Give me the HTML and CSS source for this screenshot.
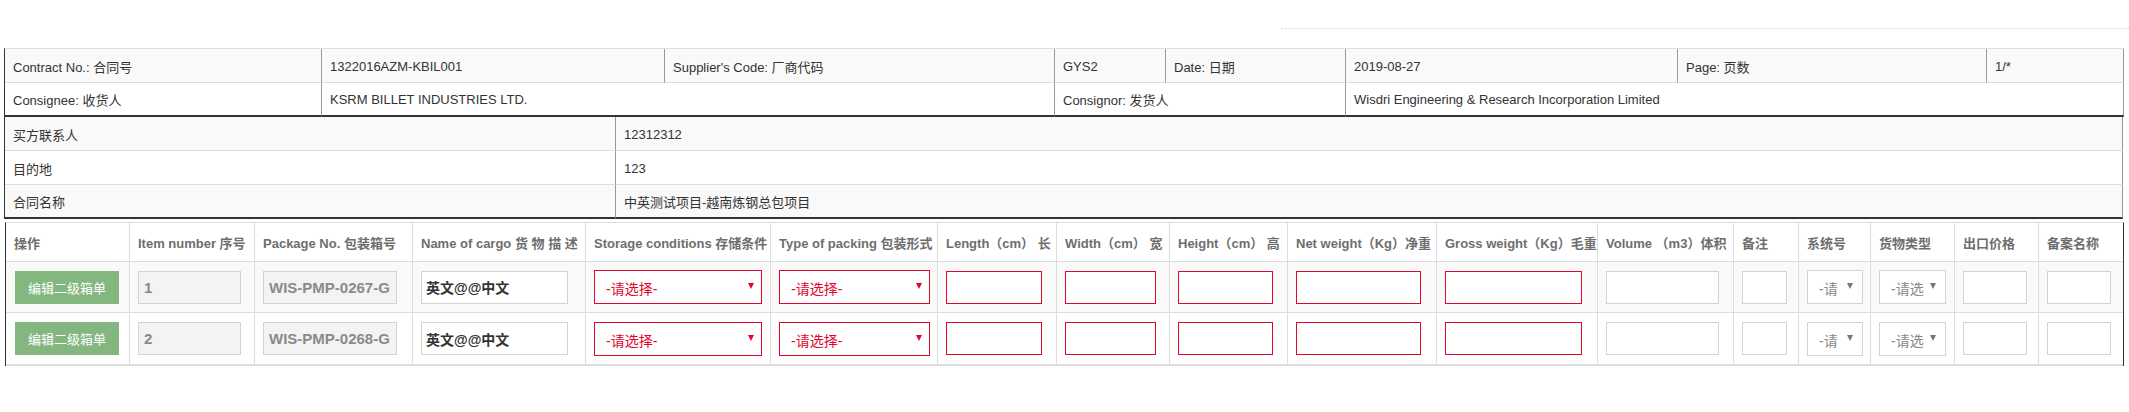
FILE: index.html
```html
<!DOCTYPE html>
<html lang="zh-CN">
<head>
<meta charset="utf-8">
<title>装箱单</title>
<link rel="stylesheet" href="styles.css">
</head>
<body>
<div class="page">
  <div class="float-panel"></div>

  <table class="info info-head">
    <colgroup>
      <col class="c317"><col class="c343"><col class="c390"><col class="c111">
      <col class="c180"><col class="c332"><col class="c309"><col class="c137">
    </colgroup>
    <tbody>
      <tr class="odd">
        <td>Contract No.: 合同号</td>
        <td>1322016AZM-KBIL001</td>
        <td>Supplier's Code: 厂商代码</td>
        <td>GYS2</td>
        <td>Date: 日期</td>
        <td>2019-08-27</td>
        <td>Page: 页数</td>
        <td>1/*</td>
      </tr>
      <tr class="last">
        <td>Consignee: 收货人</td>
        <td colspan="2">KSRM BILLET INDUSTRIES LTD.</td>
        <td colspan="2">Consignor: 发货人</td>
        <td colspan="3">Wisdri Engineering &amp; Research Incorporation Limited</td>
      </tr>
    </tbody>
  </table>

  <table class="info info-buyer">
    <colgroup><col class="c611"><col class="c1507"></colgroup>
    <tbody>
      <tr class="odd"><td>买方联系人</td><td>12312312</td></tr>
      <tr><td>目的地</td><td>123</td></tr>
      <tr class="odd last"><td>合同名称</td><td>中英测试项目-越南炼钢总包项目</td></tr>
    </tbody>
  </table>

  <table class="items">
    <colgroup>
      <col class="k124"><col class="k125"><col class="k158"><col class="k173"><col class="k185">
      <col class="k167"><col class="k119"><col class="k113"><col class="k118"><col class="k149">
      <col class="k161"><col class="k136"><col class="k65"><col class="k72"><col class="k84">
      <col class="k84"><col class="k84">
    </colgroup>
    <thead>
      <tr>
        <th>操作</th>
        <th>Item number 序号</th>
        <th>Package No. 包装箱号</th>
        <th>Name of cargo 货 物 描 述</th>
        <th>Storage conditions 存储条件</th>
        <th>Type of packing 包装形式</th>
        <th>Length（cm） 长</th>
        <th>Width（cm） 宽</th>
        <th>Height（cm） 高</th>
        <th>Net weight（Kg）净重</th>
        <th>Gross weight（Kg）毛重</th>
        <th>Volume （m3）体积</th>
        <th>备注</th>
        <th>系统号</th>
        <th>货物类型</th>
        <th>出口价格</th>
        <th>备案名称</th>
      </tr>
    </thead>
    <tbody>
      <tr class="odd">
        <td><button class="btn-edit" type="button">编辑二级箱单</button></td>
        <td><input class="fld dis w-item" value="1" disabled></td>
        <td><input class="fld dis w-pkg" value="WIS-PMP-0267-G" disabled></td>
        <td><input class="fld name w-name" value="英文@@中文"></td>
        <td><div class="sel req w-store"><span class="sel-text">-请选择-</span><i class="caret"></i></div></td>
        <td><div class="sel req w-pack"><span class="sel-text">-请选择-</span><i class="caret"></i></div></td>
        <td><input class="fld req w-len"></td>
        <td><input class="fld req w-wid"></td>
        <td><input class="fld req w-hei"></td>
        <td><input class="fld req w-net"></td>
        <td><input class="fld req w-gross"></td>
        <td><input class="fld w-vol"></td>
        <td><input class="fld w-remark"></td>
        <td><div class="sel w-sys"><span class="sel-text">-请</span><i class="caret"></i></div></td>
        <td><div class="sel w-type"><span class="sel-text">-请选</span><i class="caret"></i></div></td>
        <td><input class="fld w-price"></td>
        <td><input class="fld w-rec"></td>
      </tr>
      <tr class="last">
        <td><button class="btn-edit" type="button">编辑二级箱单</button></td>
        <td><input class="fld dis w-item" value="2" disabled></td>
        <td><input class="fld dis w-pkg" value="WIS-PMP-0268-G" disabled></td>
        <td><input class="fld name w-name" value="英文@@中文"></td>
        <td><div class="sel req w-store"><span class="sel-text">-请选择-</span><i class="caret"></i></div></td>
        <td><div class="sel req w-pack"><span class="sel-text">-请选择-</span><i class="caret"></i></div></td>
        <td><input class="fld req w-len"></td>
        <td><input class="fld req w-wid"></td>
        <td><input class="fld req w-hei"></td>
        <td><input class="fld req w-net"></td>
        <td><input class="fld req w-gross"></td>
        <td><input class="fld w-vol"></td>
        <td><input class="fld w-remark"></td>
        <td><div class="sel w-sys"><span class="sel-text">-请</span><i class="caret"></i></div></td>
        <td><div class="sel w-type"><span class="sel-text">-请选</span><i class="caret"></i></div></td>
        <td><input class="fld w-price"></td>
        <td><input class="fld w-rec"></td>
      </tr>
    </tbody>
  </table>
</div>
</body>
</html>
```

FILE: styles.css
```css
* { box-sizing: border-box; }

body {
  margin: 0;
  background: #fff;
  color: #333;
  font-family: "Liberation Sans", "Noto Sans CJK SC", sans-serif;
  font-size: 13px;
}

.page {
  position: relative;
  padding: 48px 6px 0 4px;
}

.float-panel {
  position: absolute;
  left: 1281px;
  right: 0;
  top: 28px;
  height: 370px;
  border-top: 1px dotted #cfcfcf;
  border-bottom: 1px dotted #cfcfcf;
  pointer-events: none;
}

/* ---------- info tables ---------- */
.info {
  border-collapse: separate;
  border-spacing: 0;
  table-layout: fixed;
  border-left: 1px solid #333;
}
.info-head { width: 2119px; border-top: 1px solid #ddd; }
.info-buyer { width: 2118px; }

.info td {
  height: 34px;
  padding: 1px 8px 0;
  border-right: 1px solid #999;
  border-bottom: 1px solid #ddd;
  white-space: nowrap;
  overflow: hidden;
  vertical-align: middle;
  background: #fff;
}
.info tr.odd td { background: #f9f9f9; }
.info tr.last td { border-bottom: 2px solid #333; }

.c317 { width: 317px; } .c343 { width: 343px; } .c390 { width: 390px; }
.c111 { width: 111px; } .c180 { width: 180px; } .c332 { width: 332px; }
.c309 { width: 309px; } .c137 { width: 137px; }
.c611 { width: 611px; } .c1507 { width: 1507px; }

/* ---------- item table ---------- */
.items {
  width: 2117px;
  margin: 3px 0 0 1px;
  border-collapse: separate;
  border-spacing: 0;
  table-layout: fixed;
  border-left: 1px solid #333;
  border-right: 1px solid #333;
  border-top: 1px solid #ddd;
}
.items th,
.items td {
  padding: 0 8px;
  border-right: 1px solid #ddd;
  border-bottom: 1px solid #ddd;
  vertical-align: middle;
  white-space: nowrap;
  overflow: hidden;
  text-align: left;
  background: #fff;
}
.items th:last-child,
.items td:last-child { border-right: 0; }
.items th {
  height: 39px;
  font-weight: bold;
  color: #6e6e6e;
}
.items td { height: 51px; }
.items tr.odd td { background: #f9f9f9; }
.items tr.last td { height: 53px; border-bottom: 2px solid #ddd; }

.k124 { width: 124px; } .k125 { width: 125px; } .k158 { width: 158px; }
.k173 { width: 173px; } .k185 { width: 185px; } .k167 { width: 167px; }
.k119 { width: 119px; } .k113 { width: 113px; } .k118 { width: 118px; }
.k149 { width: 149px; } .k161 { width: 161px; } .k136 { width: 136px; }
.k65 { width: 65px; } .k72 { width: 72px; } .k84 { width: 84px; }

/* ---------- controls ---------- */
.btn-edit {
  display: block;
  width: 104px;
  height: 33px;
  margin-left: 1px;
  border: 0;
  background: #84b67f;
  color: #fff;
  font-family: "Liberation Sans", "Noto Sans CJK SC", sans-serif;
  font-size: 13px;
  padding: 0;
}

.fld {
  display: block;
  height: 33px;
  margin: 0;
  padding: 0 5px;
  border: 1px solid #d3d3d3;
  background: #fff;
  font-family: "Liberation Sans", "Noto Sans CJK SC", sans-serif;
  font-size: 14px;
  color: #333;
  outline: none;
}
.fld.dis {
  background: #f3f3f3;
  color: #8a8a8a;
  font-weight: bold;
  font-size: 15px;
  -webkit-text-fill-color: #8a8a8a;
  opacity: 1;
}
.fld.name { font-weight: bold; padding-left: 4px; }
.fld.req { border-color: #e1062c; }

.sel {
  display: flex;
  align-items: center;
  height: 34px;
  padding: 2px 7px 0 11px;
  border: 1px solid #d3d3d3;
  background: #fff;
  color: #888;
  font-size: 14px;
}
.sel-text {
  flex: 1;
  min-width: 0;
  white-space: nowrap;
}
.caret {
  flex: none;
  width: 0;
  height: 0;
  margin-top: -4px;
  border-left: 3px solid transparent;
  border-right: 3px solid transparent;
  border-top: 6px solid #777;
}
.sel.req { border-color: #e1062c; color: #e1062c; }
.sel.req .caret { border-top-color: #e1062c; }
.w-sys, .w-type { padding-right: 9px; }

.w-item { width: 103px; }
.w-pkg { width: 134px; }
.w-name { width: 147px; }
.w-store { width: 168px; }
.w-pack { width: 151px; }
.w-len { width: 96px; }
.w-wid { width: 91px; }
.w-hei { width: 95px; }
.w-net { width: 125px; }
.w-gross { width: 137px; }
.w-vol { width: 113px; }
.w-remark { width: 45px; }
.w-sys { width: 56px; }
.w-type { width: 67px; }
.w-price { width: 64px; }
.w-rec { width: 64px; }
```
